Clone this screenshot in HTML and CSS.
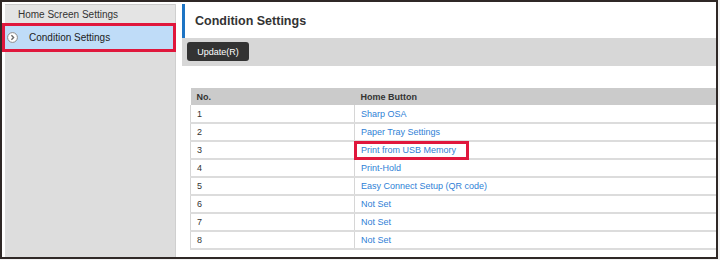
FILE: index.html
```html
<!DOCTYPE html>
<html>
<head>
    <title>Condition Settings</title>
    <meta charset="utf-8">
    <link rel="stylesheet" href="styles.css">
</head>
<body>
<div class="frame">
    <div class="sidebar">
        <div class="nav">
            <div class="nav-item">Home Screen Settings</div>
            <div class="nav-item active">
                <svg class="chev" width="11" height="11" viewBox="0 0 11 11">
                    <circle cx="5.5" cy="5.5" r="4.9" fill="#fff" stroke="#8a8a8a" stroke-width="1"/>
                    <path d="M4.4 3.2 L6.6 5.5 L4.4 7.8" fill="none" stroke="#6a6a6a" stroke-width="1.4"/>
                </svg>
                <span>Condition Settings</span>
            </div>
        </div>
    </div>
    <div class="main">
        <div class="page-title">Condition Settings</div>
        <div class="toolbar"><button class="btn">Update(R)</button></div>
        <div class="table-wrap">
            <table class="grid">
                <tr><th class="col-no">No.</th><th>Home Button</th></tr>
                <tr><td>1</td><td><a href="#">Sharp OSA</a></td></tr>
                <tr><td>2</td><td><a href="#">Paper Tray Settings</a></td></tr>
                <tr><td>3</td><td><a href="#" class="callout">Print from USB Memory</a></td></tr>
                <tr><td>4</td><td><a href="#">Print-Hold</a></td></tr>
                <tr><td>5</td><td><a href="#">Easy Connect Setup (QR code)</a></td></tr>
                <tr><td>6</td><td><a href="#">Not Set</a></td></tr>
                <tr><td>7</td><td><a href="#">Not Set</a></td></tr>
                <tr><td>8</td><td><a href="#">Not Set</a></td></tr>
            </table>
        </div>
    </div>
</div>
</body>
</html>
```

FILE: styles.css
```css
* {
	margin: 0;
	padding: 0;
	box-sizing: border-box;
}

body {
	width: 720px;
	height: 260px;
	overflow: hidden;
	background: #f2f2f2;
	font-family: "Liberation Sans", Arial, sans-serif;
	color: #333;
}

.frame {
	width: 718px;
	height: 259px;
	border: 2px solid #2f2826;
	background: #fff;
	padding-top: 2px;
	display: flex;
}

.sidebar {
	width: 174px;
	padding-left: 3px;
	display: flex;
}

.nav {
	flex: 1;
	background: #dddddd;
	border-right: 1px solid #cfcfcf;
}

.nav-item {
	height: 19px;
	line-height: 19px;
	padding-left: 13px;
	font-size: 10px;
	background: #e4e4e4;
	border-top: 1px solid #cacaca;
}

.nav-item.active {
	height: 29px;
	margin-left: -3px;
	margin-right: -1px;
	padding-left: 2px;
	border: 3px solid #e0173c;
	background: #bfdcf8;
	display: flex;
	align-items: center;
	gap: 11px;
	color: #222;
}

.chev {
	display: block;
	flex: none;
}

.main {
	flex: 1;
	margin-left: 6px;
	overflow: hidden;
}

.page-title {
	height: 34px;
	line-height: 35px;
	border-left: 3px solid #1d74c4;
	padding-left: 10px;
	font-size: 12.5px;
	font-weight: bold;
	color: #333;
}

.toolbar {
	height: 28px;
	background: #d7d7d7;
	padding: 4px 5px;
}

.btn {
	display: block;
	width: 62px;
	height: 19px;
	border: none;
	border-radius: 3px;
	background: #333;
	color: #fff;
	font-family: "Liberation Sans", Arial, sans-serif;
	font-size: 9px;
}

.table-wrap {
	padding: 22px 0 0 8px;
}

.grid {
	width: 600px;
	border-collapse: collapse;
	font-size: 9px;
}

.grid th {
	height: 17px;
	background: #cbcbcb;
	text-align: left;
	padding-left: 6px;
	color: #333;
}

.grid th.col-no {
	width: 164px;
}

.grid td {
	height: 18px;
	padding-left: 6px;
	border-bottom: 2px solid #dcdcdc;
	border-left: 1px solid #d6d6d6;
}

.grid a {
	color: #2f7fd6;
	text-decoration: none;
}

.callout {
	position: relative;
}

.callout::after {
	content: "";
	position: absolute;
	left: -7px;
	right: -13px;
	top: -4px;
	bottom: -5px;
	border: 3px solid #e0173c;
}
```
